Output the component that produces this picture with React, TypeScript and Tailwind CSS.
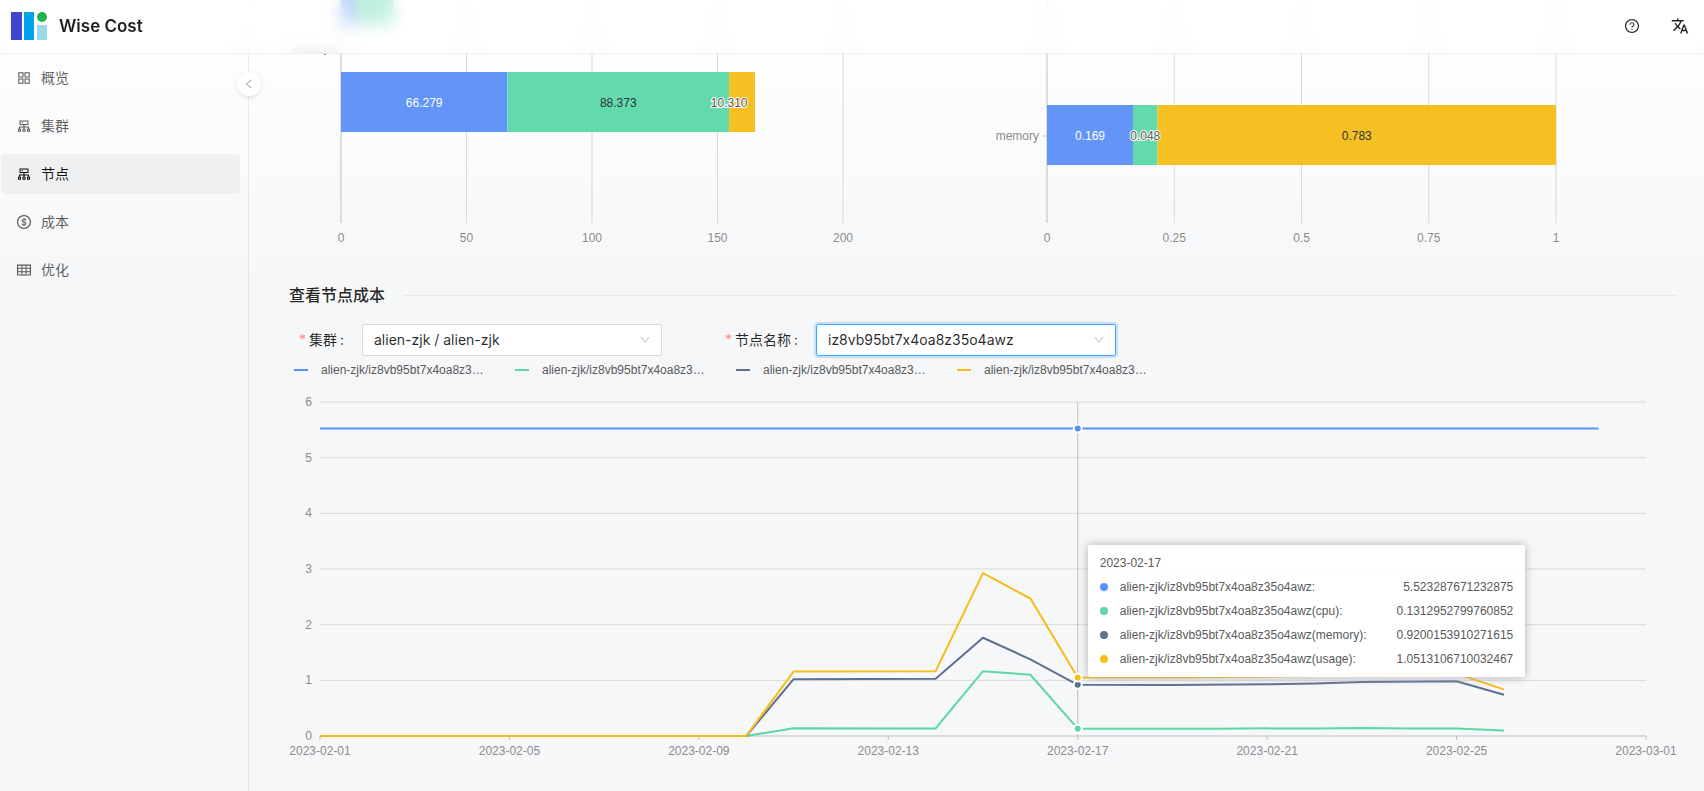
import { useLayoutEffect, useRef, useState } from "react";
import type { ComponentType, ReactNode } from "react";
import {
  AiOutlineAppstore,
  AiOutlineCluster,
  AiOutlineDollarCircle,
  AiOutlineDown,
  AiOutlineLeft,
  AiOutlineQuestionCircle,
  AiOutlineTable,
} from "react-icons/ai";
import { MdTranslate } from "react-icons/md";

const BLUE = "#5b8ff9";
const GREEN = "#5ad8a6";
const SLATE = "#5d7092";
const YELLOW = "#f6bd16";

function useWidth(initial: number) {
  const ref = useRef<HTMLDivElement>(null);
  const [width, setWidth] = useState(initial);
  useLayoutEffect(() => {
    const node = ref.current;
    if (!node) return;
    const update = () => setWidth(node.clientWidth);
    update();
    const observer = new ResizeObserver(update);
    observer.observe(node);
    return () => observer.disconnect();
  }, []);
  return { ref, width };
}

function Logo() {
  return (
    <svg width="36" height="28" viewBox="0 0 36 28" aria-hidden="true">
      <rect x="0" y="0" width="11" height="28" fill="#3f48cc" />
      <rect x="13" y="0" width="10" height="28" fill="#00a2e8" />
      <circle cx="31" cy="5" r="5" fill="#22b14c" />
      <rect x="26" y="13" width="10" height="15" fill="#99d9ea" />
    </svg>
  );
}

function Header() {
  return (
    <header className="fixed inset-x-0 top-0 z-20 flex h-[54px] items-center border-b border-black/6 bg-white/60 pr-[15px] pb-[2px] pl-[11px] backdrop-blur-[8px]">
      <a href="#" className="flex items-center gap-3">
        <Logo />
        <h1 className="text-[17px] leading-6 font-semibold text-black/88">Wise Cost</h1>
      </a>
      <div className="ml-auto flex items-center gap-[31px] text-black/85">
        <button type="button" aria-label="Help">
          <AiOutlineQuestionCircle className="size-4" />
        </button>
        <button type="button" aria-label="Language">
          <MdTranslate className="size-[18px]" />
        </button>
      </div>
    </header>
  );
}

type MenuEntry = { label: string; icon: ComponentType<{ className?: string }>; active?: boolean };

const menu: MenuEntry[] = [
  { label: "概览", icon: AiOutlineAppstore },
  { label: "集群", icon: AiOutlineCluster },
  { label: "节点", icon: AiOutlineCluster, active: true },
  { label: "成本", icon: AiOutlineDollarCircle },
  { label: "优化", icon: AiOutlineTable },
];

function Sidebar() {
  return (
    <aside className="relative w-[249px] shrink-0 border-r border-black/6 pt-[58px]">
      <nav className="flex flex-col gap-2 pr-2 pl-px">
        {menu.map(({ label, icon: Icon, active }) => (
          <a
            key={label}
            href="#"
            className={
              active
                ? "flex h-10 items-center gap-[9px] rounded-sm bg-black/4 pl-[15px] text-sm text-black/95"
                : "flex h-10 items-center gap-[9px] rounded-sm pl-[15px] text-sm text-black/65"
            }
          >
            <Icon className="size-4" />
            {label}
          </a>
        ))}
      </nav>
      <button
        type="button"
        aria-label="Collapse menu"
        className="absolute top-[72px] -right-[13px] z-10 flex size-6 items-center justify-center rounded-full bg-white text-black/35 shadow-[0_2px_8px_-2px_rgba(0,0,0,0.12),0_1px_4px_-1px_rgba(25,15,15,0.1)]"
      >
        <AiOutlineLeft className="size-3" />
      </button>
    </aside>
  );
}

type Segment = { value: number; color: string; text: string; outlined?: boolean; labelAtStart?: boolean };
type BarRow = { y: number; segments: Segment[] };

function BarChart(props: {
  max: number;
  ticks: number[];
  inset: number;
  rows: BarRow[];
  labels: { text: string; y: number }[];
  children?: ReactNode;
}) {
  const { ref, width } = useWidth(682);
  const left = 52;
  const plot = Math.max(width - left - props.inset, 100);
  const x = (value: number) => left + (value / props.max) * plot;
  return (
    <div ref={ref} className="min-w-0 flex-1">
      <svg width={width} height={248} className="block text-[12px]" role="img" aria-label="resource usage">
        {props.ticks.map((tick) => (
          <g key={tick}>
            <line x1={x(tick)} x2={x(tick)} y1={0} y2={223} stroke={tick === 0 ? "#bfbfbf" : "#d9d9d9"} />
            <text x={x(tick)} y={242} textAnchor="middle" fill="#8c8c8c">
              {tick}
            </text>
          </g>
        ))}
        {props.labels.map((label) => (
          <g key={label.text}>
            <line x1={left - 4} x2={left} y1={label.y} y2={label.y} stroke="#bfbfbf" />
            <text x={left - 8} y={label.y + 4} textAnchor="end" fill="#8c8c8c">
              {label.text}
            </text>
          </g>
        ))}
        {props.children}
        {props.rows.map((row) => {
          let sum = 0;
          const placed = row.segments.map((segment) => {
            const start = sum;
            sum += segment.value;
            return { ...segment, start, end: sum };
          });
          return (
            <g key={row.y}>
              {placed.map((s) => (
                <rect
                  key={s.color}
                  x={x(s.start)}
                  y={row.y}
                  width={x(s.end) - x(s.start)}
                  height={60}
                  fill={s.color}
                  fillOpacity={0.95}
                />
              ))}
              {row.y > 0 &&
                placed.map((s) => (
                  <text
                    key={s.color}
                    x={s.labelAtStart ? x(s.start) : (x(s.start) + x(s.end)) / 2}
                    y={row.y + 35}
                    textAnchor="middle"
                    fill={s.color === BLUE ? "#ffffff" : s.outlined ? "#595959" : "#2c3542"}
                    stroke={s.outlined ? "#ffffff" : "none"}
                    strokeWidth={2}
                    paintOrder="stroke"
                  >
                    {s.text}
                  </text>
                ))}
            </g>
          );
        })}
      </svg>
    </div>
  );
}

type Point = [day: number, value: number];
type Series = { name: string; color: string; value: string; points: Point[] };

const NODE = "alien-zjk/iz8vb95bt7x4oa8z35o4awz";

const series: Series[] = [
  {
    name: `${NODE}:`,
    color: BLUE,
    value: "5.523287671232875",
    points: [[1, 5.523], [17, 5.523], [28, 5.523]],
  },
  {
    name: `${NODE}(cpu):`,
    color: GREEN,
    value: "0.1312952799760852",
    points: [[1, 0], [10, 0], [11, 0.14], [14, 0.135], [15, 1.165], [16, 1.1], [17, 0.131], [20, 0.131], [21, 0.137], [22, 0.135], [23, 0.145], [24, 0.135], [25, 0.133], [26, 0.1]],
  },
  {
    name: `${NODE}(memory):`,
    color: SLATE,
    value: "0.9200153910271615",
    points: [[1, 0], [10, 0], [11, 1.02], [14, 1.03], [15, 1.765], [16, 1.377], [17, 0.92], [19, 0.918], [21, 0.93], [22, 0.943], [23, 0.968], [25, 0.985], [26, 0.742]],
  },
  {
    name: `${NODE}(usage):`,
    color: YELLOW,
    value: "1.0513106710032467",
    points: [[1, 0], [10, 0], [11, 1.157], [14, 1.165], [15, 2.926], [16, 2.47], [17, 1.051], [19, 1.05], [21, 1.067], [23, 1.11], [25, 1.118], [26, 0.838]],
  },
];

const dates: [number, string][] = [
  [1, "2023-02-01"],
  [5, "2023-02-05"],
  [9, "2023-02-09"],
  [13, "2023-02-13"],
  [17, "2023-02-17"],
  [21, "2023-02-21"],
  [25, "2023-02-25"],
  [29, "2023-03-01"],
];

function CostChart() {
  const { ref, width } = useWidth(1388);
  const left = 31;
  const top = 20;
  const bottom = 354;
  const x = (day: number) => left + ((day - 1) / 28) * (width - left * 2);
  const y = (value: number) => bottom - (value / 6) * (bottom - top);
  const focus = 17;
  return (
    <div ref={ref} className="relative">
      <svg width={width} height={380} className="block text-[12px]" role="img" aria-label="node cost">
        {[0, 1, 2, 3, 4, 5, 6].map((tick) => (
          <g key={tick}>
            <line x1={left} x2={width - left} y1={y(tick)} y2={y(tick)} stroke={tick === 0 ? "#bfbfbf" : "#d9d9d9"} />
            <text x={left - 8} y={y(tick) + 4} textAnchor="end" fill="#8c8c8c">
              {tick}
            </text>
          </g>
        ))}
        {dates.map(([day, text]) => (
          <g key={text}>
            <line x1={x(day)} x2={x(day)} y1={bottom} y2={bottom + 4} stroke="#bfbfbf" />
            <text x={x(day)} y={bottom + 19} textAnchor="middle" fill="#8c8c8c">
              {text}
            </text>
          </g>
        ))}
        {series.map((s) => (
          <polyline
            key={s.color}
            points={s.points.map(([day, value]) => `${x(day)},${y(value)}`).join(" ")}
            fill="none"
            stroke={s.color}
            strokeWidth={2}
            strokeLinejoin="round"
          />
        ))}
        <line x1={x(focus)} x2={x(focus)} y1={top} y2={bottom} stroke="#bfbfbf" />
        {series.map((s) => {
          const point = s.points.find(([day]) => day === focus);
          return point ? (
            <circle key={s.color} cx={x(focus)} cy={y(point[1])} r={4} fill={s.color} stroke="#ffffff" strokeWidth={2} />
          ) : null;
        })}
      </svg>
      <div
        className="absolute top-[163px] rounded-[3px] bg-white/95 px-3 pt-3 text-[12px] leading-3 whitespace-nowrap text-[#595959] shadow-[0_0_10px_#aeaeae]"
        style={{ left: x(focus) + 10 }}
      >
        <p className="mb-3">2023-02-17</p>
        <ul>
          {series.map((s) => (
            <li key={s.color} className="mb-3 flex items-center">
              <svg width="8" height="8" className="mr-3 shrink-0" aria-hidden="true">
                <circle cx="4" cy="4" r="4" fill={s.color} />
              </svg>
              <span className="mr-[30px]">{s.name}</span>
              <span className="ml-auto">{s.value}</span>
            </li>
          ))}
        </ul>
      </div>
    </div>
  );
}

function Field(props: { id: string; label: string; focused?: boolean; children: ReactNode }) {
  return (
    <div className="flex items-center">
      <label htmlFor={props.id} className="flex items-center text-sm leading-8 text-black/85">
        <span className="w-[10px] font-['Liberation_Serif',serif] text-[#ff7875]">*</span>
        {props.label}
        <span className="w-[25px] pl-[3px]">:</span>
      </label>
      <div className="relative">
        <select
          id={props.id}
          className={
            props.focused
              ? "h-8 w-[300px] appearance-none rounded-xs border border-[#40a9ff] bg-white px-[11px] text-sm text-black/85 shadow-[0_0_0_2px_rgba(24,144,255,0.2)] outline-none [font-variant-ligatures:no-contextual]"
              : "h-8 w-[300px] appearance-none rounded-xs border border-[#d9d9d9] bg-white px-[11px] text-sm text-black/85 outline-none [font-variant-ligatures:no-contextual]"
          }
        >
          {props.children}
        </select>
        <AiOutlineDown className="pointer-events-none absolute top-[10px] right-[11px] size-3 text-black/25" />
      </div>
    </div>
  );
}

export default function App() {
  return (
    <div className="flex min-h-screen bg-[linear-gradient(#ffffff,#f6f7f9_36%)] font-[Inter,'Noto_Sans_CJK_SC',sans-serif]">
      <Header />
      <Sidebar />
      <main className="min-w-0 flex-1 pr-[27px] pl-10">
        <section className="flex gap-6 font-['Liberation_Sans',Arial,sans-serif]">
          <BarChart
            max={200}
            ticks={[0, 50, 100, 150, 200]}
            inset={128}
            labels={[]}
            rows={[
              {
                y: -36,
                segments: [
                  { value: 6, color: BLUE, text: "" },
                  { value: 15, color: GREEN, text: "" },
                ],
              },
              {
                y: 72,
                segments: [
                  { value: 66.279, color: BLUE, text: "66.279" },
                  { value: 88.373, color: GREEN, text: "88.373" },
                  { value: 10.31, color: YELLOW, text: "10.310", outlined: true, labelAtStart: true },
                ],
              },
            ]}
          >
            <rect x={2} y={47} width={46} height={6} fill="#8c8c8c" fillOpacity={0.3} />
            <rect x={35} y={54} width={2} height={1} fill="#8c8c8c" />
          </BarChart>
          <BarChart
            max={1}
            ticks={[0, 0.25, 0.5, 0.75, 1]}
            inset={121}
            labels={[{ text: "memory", y: 136 }]}
            rows={[
              {
                y: 105,
                segments: [
                  { value: 0.169, color: BLUE, text: "0.169" },
                  { value: 0.048, color: GREEN, text: "0.048", outlined: true },
                  { value: 0.783, color: YELLOW, text: "0.783" },
                ],
              },
            ]}
          />
        </section>
        <section>
          <h2 className="mt-[35px] flex items-center gap-[18px] text-base leading-6 font-medium text-black/85 after:h-px after:flex-1 after:bg-black/6">
            查看节点成本
          </h2>
          <form className="mt-[17px] flex flex-wrap gap-x-[63px] gap-y-3 pl-[10px]">
            <Field id="cluster" label="集群">
              <option>alien-zjk / alien-zjk</option>
            </Field>
            <Field id="node" label="节点名称" focused>
              <option>iz8vb95bt7x4oa8z35o4awz</option>
            </Field>
          </form>
          <div className="font-['Liberation_Sans',Arial,sans-serif]">
            <ul className="mt-[2px] flex h-6 items-center pl-[5px] text-[12px] text-[#595959]">
              {series.map((s) => (
                <li key={s.color} className="flex w-[221px] items-center gap-[13px] whitespace-nowrap">
                  <svg width="14" height="2" aria-hidden="true">
                    <rect width="14" height="2" fill={s.color} />
                  </svg>
                  alien-zjk/iz8vb95bt7x4oa8z3…
                </li>
              ))}
            </ul>
            <CostChart />
          </div>
        </section>
      </main>
    </div>
  );
}
